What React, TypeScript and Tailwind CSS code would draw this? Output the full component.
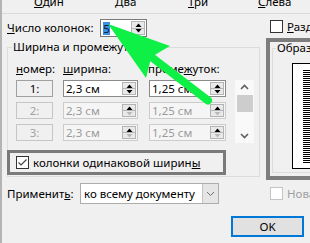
import React from 'react';

// small black triangles used by the spin buttons
function Tri({ up = false, color = '#000' }: { up?: boolean; color?: string }) {
  return (
    <svg width="7" height="4" viewBox="0 0 7 4">
      <polygon points={up ? '0.5,4 3.5,0.5 6.5,4' : '0.5,0 3.5,3.5 6.5,0'} fill={color} />
    </svg>
  );
}

function Spin({ dim = false }: { dim?: boolean }) {
  return (
    <div className="flex flex-col w-[14px] self-stretch my-[1px] mr-[1px]">
      <div className="flex-1 flex items-center justify-center border border-[#b4b4b4] bg-[#e9e9e9]">
        <Tri up />
      </div>
      <div className="flex-1 flex items-center justify-center border border-t-0 border-[#b4b4b4] bg-[#e9e9e9]">
        <Tri color={dim ? '#b9b9b9' : '#000'} />
      </div>
    </div>
  );
}

function Field({ value, className, dim = false }: { value: string; className: string; dim?: boolean }) {
  return (
    <div
      className={`flex items-center border ${className} ${
        dim ? 'border-[#cccccc] bg-[#f5f5f5] text-[#9a9a9a]' : 'border-[#8a8a8a] bg-white text-black'
      }`}
    >
      <span className="pl-[2px] flex-1 whitespace-nowrap">{value}</span>
      <Spin dim={dim} />
    </div>
  );
}

function Row({ n, dim = false }: { n: number; dim?: boolean }) {
  return (
    <div className="flex h-[17px]">
      <div
        className={`w-[37px] border flex items-center justify-center ${
          dim ? 'border-[#c6c6c6] text-[#a0a0a0]' : 'border-[#a0a0a0]'
        }`}
      >
        {n}:
      </div>
      <Field value="2,3 см" className="ml-[10px] w-[75px]" dim={dim} />
      <Field value="1,25 см" className="ml-[11px] w-[77px]" dim={dim} />
    </div>
  );
}

function Chevron({ up = false, color = '#5f5f5f', w = 1.6 }: { up?: boolean; color?: string; w?: number }) {
  return (
    <svg width="9" height="6" viewBox="0 0 9 6">
      <polyline
        points={up ? '1,5 4.5,1.5 8,5' : '1,1 4.5,4.5 8,1'}
        fill="none"
        stroke={color}
        strokeWidth={w}
      />
    </svg>
  );
}

function Check({ checked = false, dim = false, className = '' }: { checked?: boolean; dim?: boolean; className?: string }) {
  return (
    <div
      className={`w-[13px] h-[13px] shrink-0 border bg-white flex items-center justify-center ${
        dim ? 'border-[#c4c4c4]' : 'border-[#333333]'
      } ${className}`}
    >
      {checked && (
        <svg width="11" height="11" viewBox="0 0 11 11">
          <polyline points="1.5,5.5 4,8 9.5,2.5" fill="none" stroke="#444" strokeWidth="1.2" />
        </svg>
      )}
    </div>
  );
}

export default function App() {
  return (
    <div className="relative w-[310px] h-[243px] overflow-hidden bg-[#f0f0f0] border-l-2 border-[#b4b4b4] text-[11.5px] leading-[16px] text-black font-['Noto_Sans',sans-serif]">
      {/* preset labels, cut off at the top */}
      <div className="h-[14px] border-b border-[#d9d9d9] overflow-hidden">
        <div className="grid grid-cols-[81px_73px_70px_auto] pl-[32px] -mt-[6px]">
          <span><u>О</u>дин</span>
          <span><u>Д</u>ва</span>
          <span><u>Т</u>ри</span>
          <span><u>С</u>лева</span>
        </div>
      </div>

      <div className="flex">
        {/* left side */}
        <div className="w-[264px] shrink-0 pl-[5px]">
          <div className="mt-[5px] flex items-center h-[18px]">
            <span className="w-[93px]"><u>Ч</u>исло колонок:</span>
            <div className="w-[47px] h-[18px] border border-[#7a7a7a] bg-white flex items-center">
              <span className="ml-[2px] w-[7px] text-center bg-[#3d8ee6] text-[#0d1d36] leading-[13px]">5</span>
              <span className="flex-1" />
              <Spin />
            </div>
          </div>

          <fieldset className="mt-[2px] w-[253px] border border-[#dcdcdc] pb-[1px]">
            <legend className="ml-[4px] px-[1px]">Ширина и промежуток</legend>
            <div className="mt-[6px] flex h-[16px]">
              <span className="ml-[8px] w-[47px]"><u>н</u>омер:</span>
              <span className="w-[85px]"><u>ш</u>ирина:</span>
              <span>проме<u>ж</u>уток:</span>
            </div>
            <div className="mt-[3px] flex">
              <div className="flex flex-col gap-[5px] ml-[8px]">
                <Row n={1} />
                <Row n={2} dim />
                <Row n={3} dim />
              </div>
              <div className="ml-[9px] w-[19px] h-[63px] bg-[#f9f9f9] flex flex-col items-center">
                <div className="h-[14px] flex items-center justify-center">
                  <Chevron up />
                </div>
                <div className="mt-[1px] w-[16px] h-[17px] bg-[#cdcdcd]" />
                <div className="flex-1" />
                <div className="h-[14px] flex items-center justify-center">
                  <Chevron />
                </div>
              </div>
            </div>
            <div className="mt-[7px] -ml-[1px] w-[219px] h-[25px] border-[3px] border-[#7a7a7a] flex items-center">
              <Check checked className="ml-[6px]" />
              <span className="ml-[4px]">колонки одинаковой ширин<u>ы</u></span>
            </div>
          </fieldset>

          <div className="mt-[6px] flex items-center h-[21px]">
            <span className="w-[73px]">Применит<u>ь</u>:</span>
            <div className="w-[139px] h-[21px] border border-[#adadad] bg-white flex items-center">
              <span className="pl-[3px] flex-1 whitespace-nowrap">ко всему документу</span>
              <div className="w-[16px] h-full bg-[#e5e5e5] border-l border-[#c4c4c4] flex items-center justify-center">
                <Chevron color="#707070" w={1} />
              </div>
            </div>
          </div>
        </div>

        {/* right side */}
        <div className="w-[90px] shrink-0">
          <div className="mt-[6px] ml-[4px] flex items-center h-[13px]">
            <Check />
            <span className="ml-[4px] whitespace-nowrap"><u>Р</u>азделитель</span>
          </div>
          <div className="mt-[5px] w-[90px] h-[142px] border-4 border-[#7d7d7d] pl-[2px] pb-[3px]">
            <fieldset className="h-full border border-[#dcdcdc]">
              <legend className="ml-[3px] px-[1px] leading-[12px]">Образец</legend>
              <div className="mt-[9px] ml-[19px] h-[106px] border border-black bg-white">
                <div className="ml-[10px] mt-[6px] h-[94px] bg-[repeating-linear-gradient(to_bottom,#000_0px,#000_1px,#fff_1px,#fff_2px)]" />
              </div>
            </fieldset>
          </div>
          <div className="mt-[7px] ml-[4px] flex items-center h-[13px] text-[#a0a0a0]">
            <Check dim />
            <span className="ml-[4px] whitespace-nowrap">Новая колонка</span>
          </div>
        </div>
      </div>

      <div className="mt-[12px] flex justify-end pr-[6px]">
        <button className="w-[73px] h-[21px] border-2 border-[#0078d7] bg-[#e1e1e1] leading-[16px]">OK</button>
      </div>

      {/* green annotation arrow */}
      <svg className="absolute inset-0 pointer-events-none" width="310" height="243" viewBox="0 0 310 243">
        <line x1="150.5" y1="57.9" x2="206" y2="100.5" stroke="#0ef046" strokeWidth="8" strokeLinecap="round" />
        <polygon points="106,24 168,46 152.6,55.1 148.4,60.7 144,78" fill="#0ef046" />
      </svg>
    </div>
  );
}
